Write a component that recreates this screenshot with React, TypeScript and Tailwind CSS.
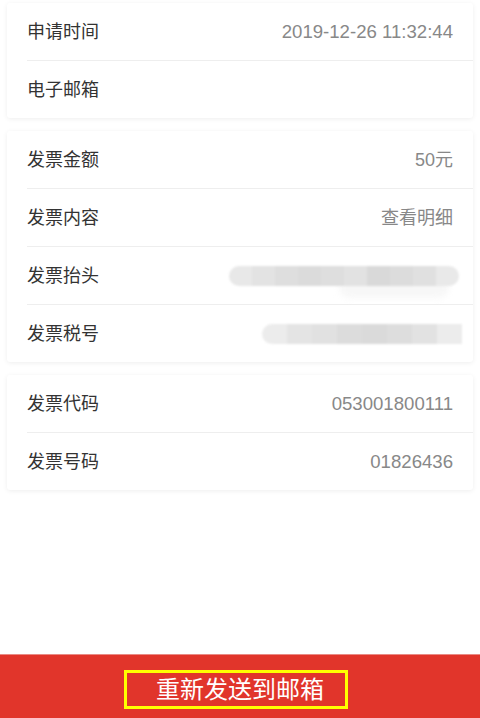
import React from 'react';

interface Row {
  label: string;
  value?: string;
  blur?: 'title' | 'tax';
}

const groups: Row[][] = [
  [
    { label: '申请时间', value: '2019-12-26 11:32:44' },
    { label: '电子邮箱' },
  ],
  [
    { label: '发票金额', value: '50元' },
    { label: '发票内容', value: '查看明细' },
    { label: '发票抬头', blur: 'title' },
    { label: '发票税号', blur: 'tax' },
  ],
  [
    { label: '发票代码', value: '053001800111' },
    { label: '发票号码', value: '01826436' },
  ],
];

const titleShades = ['#e8e8e8', '#e3e3e3', '#dedede', '#dbdbdb', '#dedede', '#e2e2e2', '#d9d9d9', '#dcdcdc', '#e0e0e0', '#e9e9e9'];
const taxShades = ['#ececec', '#e4e4e4', '#e1e1e1', '#dcdcdc', '#dadada', '#dddddd', '#e2e2e2', '#ececec'];

const Blurred: React.FC<{ kind: 'title' | 'tax' }> = ({ kind }) => {
  if (kind === 'title') {
    return (
      <div className="relative mr-[-6px] h-[20px] w-[230px]">
        <div className="absolute left-[110px] top-[12px] h-[20px] w-[110px] rounded-full bg-[#f7f7f7] blur-[3px]" />
        <div className="relative flex h-full overflow-hidden rounded-full blur-[1px]">
          {titleShades.map((c, i) => (
            <div key={i} className="h-full flex-1" style={{ backgroundColor: c }} />
          ))}
        </div>
      </div>
    );
  }
  return (
    <div className="mr-[-9px] flex h-[20px] w-[200px] overflow-hidden rounded-l-full rounded-r-[3px] blur-[1px]">
      {taxShades.map((c, i) => (
        <div key={i} className="h-full flex-1" style={{ backgroundColor: c }} />
      ))}
    </div>
  );
};

const hasCjk = (s: string) => /[\u4e00-\u9fff]/.test(s);

export default function App() {
  return (
    <div
      className="flex h-screen w-full flex-col bg-white"
      style={{ fontFamily: '"Liberation Sans", "Noto Sans CJK SC", sans-serif' }}
    >
      <main className="flex flex-1 flex-col gap-[13px] px-[7px] pt-[3px]">
        {groups.map((rows, gi) => (
          <div key={gi} className="rounded-[3px] bg-white shadow-[0_1px_5px_rgba(0,0,0,0.07)]">
            {rows.map((r, ri) => (
              <div key={r.label} className="pl-[20px]">
                {ri > 0 && <div className="h-px bg-[#eeeeee]" />}
                <div className="flex h-[57px] items-center justify-between pr-[20px] pt-px">
                  <span className="text-[18px] text-[#333333]">{r.label}</span>
                  {r.value && (
                    <span className={hasCjk(r.value) ? 'text-[18px] text-[#888888]' : 'text-[18.6px] text-[#888888]'}>
                      {r.value}
                    </span>
                  )}
                  {r.blur && <Blurred kind={r.blur} />}
                </div>
              </div>
            ))}
          </div>
        ))}
      </main>

      {/* Bottom action */}
      <div className="flex h-[64px] justify-center border-t border-[#e98a84] bg-[#e1352b] pt-[15px]">
        <button className="mr-[9px] flex h-[39px] w-[224px] items-center justify-center border-[3px] border-[#ffff00] pl-[9px] text-[24px] leading-none text-white">
          重新发送到邮箱
        </button>
      </div>
    </div>
  );
}
